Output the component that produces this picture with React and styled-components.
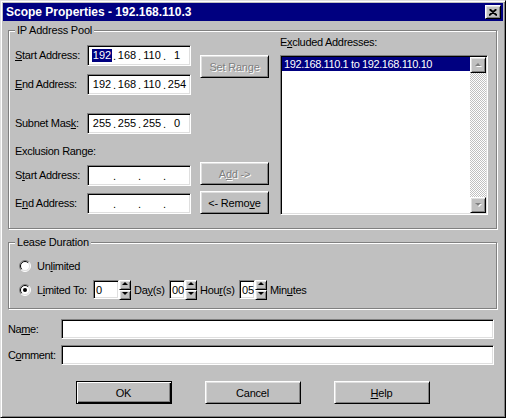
import React from "react";
import styled, { createGlobalStyle, css } from "styled-components";

const GlobalStyle = createGlobalStyle`
  html, body { margin: 0; padding: 0; background: #c0c0c0; }
  body {
    font-family: "Liberation Sans", Arial, sans-serif;
    font-size: 11px;
    color: #000;
  }
  u { text-decoration-thickness: 1px; text-underline-offset: 1px; }
`;

const raised = css`
  background: #c0c0c0;
  border: 1px solid;
  border-color: #fff #000 #000 #fff;
  box-shadow: inset 1px 1px #dfdfdf, inset -1px -1px #808080;
`;

const sunken = css`
  background: #fff;
  border: 1px solid;
  border-color: #808080 #fff #fff #808080;
  box-shadow: inset 1px 1px #000, inset -1px -1px #dfdfdf;
`;

const Window = styled.div`
  width: 506px;
  height: 418px;
  box-sizing: border-box;
  background: #c0c0c0;
  border: 1px solid;
  border-color: #dfdfdf #000 #000 #dfdfdf;
  box-shadow: inset 1px 1px #fff, inset -1px -1px #808080;
  padding: 2px;
  display: flex;
  flex-direction: column;
`;

const TitleBar = styled.div`
  height: 18px;
  background: #000080;
  display: flex;
  align-items: center;
  justify-content: space-between;
  padding: 0 2px 0 3px;
`;

const Title = styled.span`
  color: #fff;
  font-weight: bold;
  font-size: 12px;
`;

const CloseButton = styled.div`
  ${raised};
  box-sizing: border-box;
  width: 16px;
  height: 14px;
  display: flex;
  align-items: center;
  justify-content: center;
`;

const Body = styled.div`
  padding: 0 6px 0 5px;
  display: flex;
  flex-direction: column;
`;

const Group = styled.div`
  position: relative;
  box-sizing: border-box;
  height: ${(p) => p.$h}px;
  margin-top: ${(p) => p.$mt}px;
  border: 1px solid #808080;
  box-shadow: 1px 1px 0 #fff, inset 1px 1px 0 #fff;
`;

const GroupTitle = styled.span`
  position: absolute;
  top: -7px;
  left: 6px;
  padding: 0 2px;
  line-height: 13px;
  background: #c0c0c0;
  letter-spacing: -0.2px;
`;

const PoolLayout = styled.div`
  display: flex;
  align-items: flex-start;
  padding: 5px 8px 0 6px;
`;

const LeftCol = styled.div`
  width: 176px;
  padding-top: 9px;
  display: flex;
  flex-direction: column;
`;

const FieldRow = styled.div`
  display: flex;
  align-items: center;
  justify-content: space-between;
  height: 21px;
  margin-top: ${(p) => p.$mt || 0}px;
`;

const Label = styled.span`
  letter-spacing: -0.3px;
  white-space: nowrap;
  line-height: 13px;
  flex-shrink: 0;
`;

const SectionLabel = styled.div`
  line-height: 13px;
  margin-top: ${(p) => p.$mt || 0}px;
  letter-spacing: -0.3px;
`;

const IpBox = styled.div`
  ${sunken};
  box-sizing: border-box;
  width: 104px;
  height: 21px;
  display: flex;
  align-items: center;
  padding-left: 4px;
`;

const Octet = styled.span`
  width: 20px;
  display: flex;
  justify-content: center;
`;

const OctetText = styled.span`
  line-height: 13px;
  padding: 0 0.5px;
  ${(p) =>
    p.$selected &&
    css`
      background: #000080;
      color: #fff;
    `}
`;

const Dot = styled.span`
  width: 5px;
  text-align: center;
`;

const ButtonCol = styled.div`
  margin-left: 9px;
  width: 69px;
  padding-top: 19px;
  display: flex;
  flex-direction: column;
`;

const Button = styled.div`
  ${raised};
  box-sizing: border-box;
  width: ${(p) => p.$w || 69}px;
  height: 23px;
  margin-top: ${(p) => p.$mt || 0}px;
  display: flex;
  align-items: center;
  justify-content: center;
  white-space: nowrap;
  letter-spacing: -0.2px;
  ${(p) =>
    p.$disabled &&
    css`
      color: #808080;
      text-shadow: 1px 1px 0 #fff;
    `}
  ${(p) =>
    p.$default &&
    css`
      border-color: #000;
      box-shadow: inset 1px 1px #fff, inset -1px -1px #000,
        inset -2px -2px #808080;
    `}
`;

const ListCol = styled.div`
  margin-left: 11px;
  width: 208px;
  display: flex;
  flex-direction: column;
`;

const ListBox = styled.div`
  ${sunken};
  box-sizing: border-box;
  margin-top: 6px;
  height: 160px;
  padding: 1px;
  display: flex;
`;

const ListItems = styled.div`
  flex: 1;
`;

const ListItem = styled.div`
  height: 14px;
  line-height: 14px;
  padding-left: 2px;
  letter-spacing: -0.4px;
  white-space: nowrap;
  overflow: hidden;
  ${(p) =>
    p.$selected &&
    css`
      background: #000080;
      color: #fff;
    `}
`;

const ScrollBar = styled.div`
  width: 16px;
  display: flex;
  flex-direction: column;
  justify-content: space-between;
  background-color: #fff;
  background-image: repeating-conic-gradient(#c0c0c0 0 25%, #fff 0 50%);
  background-size: 2px 2px;
`;

const ScrollButton = styled.div`
  ${raised};
  box-sizing: border-box;
  width: 16px;
  height: 16px;
  display: flex;
  align-items: center;
  justify-content: center;
`;

const LeaseBody = styled.div`
  padding: 16px 0 0 10px;
  display: flex;
  flex-direction: column;
`;

const RadioRow = styled.div`
  display: flex;
  align-items: center;
  height: ${(p) => p.$h || 14}px;
  margin-top: ${(p) => p.$mt || 0}px;
`;

const RadioText = styled.span`
  margin-left: 6px;
  letter-spacing: -0.3px;
  white-space: nowrap;
  width: ${(p) => (p.$w ? `${p.$w}px` : "auto")};
`;

const SpinWrap = styled.div`
  display: flex;
  align-items: center;
`;

const SpinInput = styled.div`
  ${sunken};
  box-sizing: border-box;
  width: ${(p) => p.$w}px;
  height: 19px;
  padding-left: 2px;
  display: flex;
  align-items: center;
  overflow: hidden;
`;

const SpinButtons = styled.div`
  display: flex;
  flex-direction: column;
`;

const SpinButton = styled.div`
  ${raised};
  box-sizing: border-box;
  width: 12px;
  height: ${(p) => p.$h}px;
  display: flex;
  align-items: center;
  justify-content: center;
`;

const Unit = styled.span`
  margin-left: 3px;
  width: ${(p) => p.$w}px;
  letter-spacing: -0.3px;
  white-space: nowrap;
`;

const FormRow = styled.div`
  display: flex;
  align-items: center;
  margin-top: ${(p) => p.$mt}px;
  margin-right: 3px;
`;

const FormLabel = styled.span`
  width: 53px;
  flex-shrink: 0;
  letter-spacing: -0.4px;
`;

const TextInput = styled.div`
  ${sunken};
  box-sizing: border-box;
  flex: 1;
  height: 20px;
`;

const ButtonBar = styled.div`
  display: flex;
  justify-content: center;
  gap: 33px;
  margin-top: 16px;
`;

function Triangle({ up, color = "#000", shadow }) {
  const pts = up ? "0,3 3,0 6,3" : "0,0 3,3 6,0";
  return (
    <svg width="7" height="5" viewBox="0 0 7 5">
      {shadow && <polygon points={pts} fill="#fff" transform="translate(1,1)" />}
      <polygon points={pts} fill={color} />
    </svg>
  );
}

function Radio({ checked }) {
  return (
    <svg width="12" height="12" viewBox="0 0 12 12">
      <circle cx="6" cy="6" r="5" fill="#fff" />
      <path d="M2.1,9.9 A5.5,5.5 0 0 1 9.9,2.1" fill="none" stroke="#808080" />
      <path d="M9.9,2.1 A5.5,5.5 0 0 1 2.1,9.9" fill="none" stroke="#fff" />
      <path d="M2.8,9.2 A4.5,4.5 0 0 1 9.2,2.8" fill="none" stroke="#000" />
      <path d="M9.2,2.8 A4.5,4.5 0 0 1 2.8,9.2" fill="none" stroke="#dfdfdf" />
      {checked && <circle cx="6" cy="6" r="2" fill="#000" />}
    </svg>
  );
}

function IpField({ octets, selectFirst }) {
  return (
    <IpBox>
      {octets.map((o, i) => (
        <React.Fragment key={i}>
          {i > 0 && <Dot>.</Dot>}
          <Octet>
            <OctetText $selected={selectFirst && i === 0}>{o}</OctetText>
          </Octet>
        </React.Fragment>
      ))}
    </IpBox>
  );
}

function Spin({ value, w }) {
  return (
    <SpinWrap>
      <SpinInput $w={w}>{value}</SpinInput>
      <SpinButtons>
        <SpinButton $h={10}>
          <Triangle up />
        </SpinButton>
        <SpinButton $h={10}>
          <Triangle />
        </SpinButton>
      </SpinButtons>
    </SpinWrap>
  );
}

export default function App() {
  const empty = ["", "", "", ""];
  return (
    <>
      <GlobalStyle />
      <Window>
        <TitleBar>
          <Title>Scope Properties - 192.168.110.3</Title>
          <CloseButton>
            <svg width="8" height="7" viewBox="0 0 8 7">
              <path d="M0.5,0.5 L7.5,6.5 M7.5,0.5 L0.5,6.5 M1.5,0.5 L8.5,6.5 M6.5,0.5 L-0.5,6.5" stroke="#000" strokeWidth="1.2" />
            </svg>
          </CloseButton>
        </TitleBar>

        <Body>
          <Group $h={199} $mt={9}>
            <GroupTitle>IP Address Pool</GroupTitle>
            <PoolLayout>
              <LeftCol>
                <FieldRow>
                  <Label><u>S</u>tart Address:</Label>
                  <IpField octets={["192", "168", "110", "1"]} selectFirst />
                </FieldRow>
                <FieldRow $mt={8}>
                  <Label><u>E</u>nd Address:</Label>
                  <IpField octets={["192", "168", "110", "254"]} />
                </FieldRow>
                <FieldRow $mt={18}>
                  <Label>Subnet Mas<u>k</u>:</Label>
                  <IpField octets={["255", "255", "255", "0"]} />
                </FieldRow>
                <SectionLabel $mt={11}>Exclusion Range:</SectionLabel>
                <FieldRow $mt={7}>
                  <Label>S<u>t</u>art Address:</Label>
                  <IpField octets={empty} />
                </FieldRow>
                <FieldRow $mt={7}>
                  <Label>E<u>n</u>d Address:</Label>
                  <IpField octets={empty} />
                </FieldRow>
              </LeftCol>

              <ButtonCol>
                <Button $disabled>Set Range</Button>
                <Button $disabled $mt={84}>A<u>d</u>d -&gt;</Button>
                <Button $mt={6}>&lt;- Remo<u>v</u>e</Button>
              </ButtonCol>

              <ListCol>
                <Label>E<u>x</u>cluded Addresses:</Label>
                <ListBox>
                  <ListItems>
                    <ListItem $selected>192.168.110.1 to 192.168.110.10</ListItem>
                  </ListItems>
                  <ScrollBar>
                    <ScrollButton>
                      <Triangle up color="#808080" shadow />
                    </ScrollButton>
                    <ScrollButton>
                      <Triangle color="#808080" shadow />
                    </ScrollButton>
                  </ScrollBar>
                </ListBox>
              </ListCol>
            </PoolLayout>
          </Group>

          <Group $h={67} $mt={13}>
            <GroupTitle>Lease Duration</GroupTitle>
            <LeaseBody>
              <RadioRow>
                <Radio />
                <RadioText>Un<u>l</u>imited</RadioText>
              </RadioRow>
              <RadioRow $h={19} $mt={7}>
                <Radio checked />
                <RadioText $w={56}>L<u>i</u>mited To:</RadioText>
                <Spin value="0" w={26} />
                <Unit $w={35}>Da<u>y</u>(s)</Unit>
                <Spin value="00" w={16} />
                <Unit $w={39}>Hou<u>r</u>(s)</Unit>
                <Spin value="05" w={16} />
                <Unit $w={50}>Min<u>u</u>tes</Unit>
              </RadioRow>
            </LeaseBody>
          </Group>

          <FormRow $mt={10}>
            <FormLabel>Na<u>m</u>e:</FormLabel>
            <TextInput />
          </FormRow>
          <FormRow $mt={6}>
            <FormLabel>C<u>o</u>mment:</FormLabel>
            <TextInput />
          </FormRow>

          <ButtonBar>
            <Button $w={96} $default>OK</Button>
            <Button $w={96}>Cancel</Button>
            <Button $w={96}><u>H</u>elp</Button>
          </ButtonBar>
        </Body>
      </Window>
    </>
  );
}
